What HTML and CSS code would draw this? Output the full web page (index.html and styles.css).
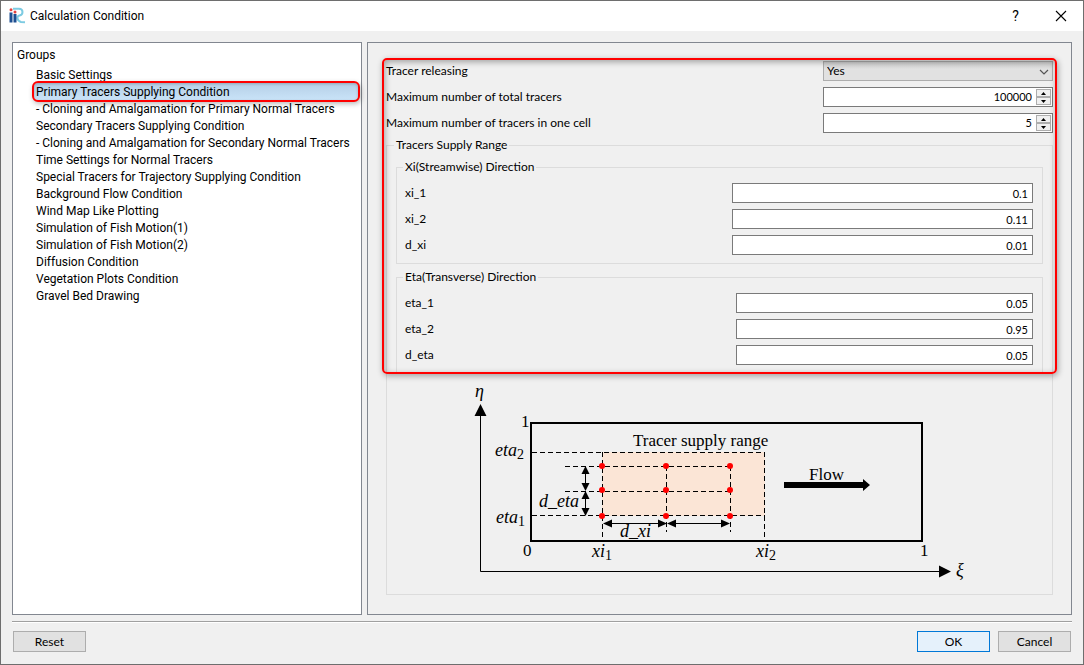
FILE: index.html
```html
<!DOCTYPE html>
<html lang="en">
<head>
<meta charset="utf-8">
<title>Calculation Condition</title>
<link rel="stylesheet" href="styles.css">
</head>
<body>
<div class="window">
  <header class="titlebar">
    <svg class="logo" width="18" height="18" viewBox="0 0 18 18" aria-hidden="true">
      <path d="M5 1.800H11Q14.500 2 14.500 5T11.500 8.500Q9 9 9.500 11.500T13 15L17 15.200" fill="none" stroke="#7dcbe2" stroke-width="2"/>
      <path d="M1.500 5.500H4.500V15.500H1.500ZM5.500 7H8.500V15.500H5.500Z" fill="#1d4f91"/>
      <circle cx="3" cy="2.800" r="1.500" fill="#e5423f"/>
      <circle cx="7" cy="5" r="1.500" fill="#e5423f"/>
    </svg>
    <h1 class="title">Calculation Condition</h1>
    <button class="title-button" type="button" aria-label="Help">?</button>
    <button class="title-button" type="button" aria-label="Close">
      <svg width="12" height="12" viewBox="0 0 12 12"><path d="M1 1L11 11M11 1L1 11" stroke="#000" stroke-width="1.100"/></svg>
    </button>
  </header>

  <main class="content">
    <nav class="groups" aria-label="Groups">
      <h2 class="groups-title">Groups</h2>
      <ul class="group-list">
        <li><button type="button" class="group">Basic Settings</button></li>
        <li><button type="button" class="group selected" aria-current="true">Primary Tracers Supplying Condition</button></li>
        <li><button type="button" class="group">- Cloning and Amalgamation for Primary Normal Tracers</button></li>
        <li><button type="button" class="group">Secondary Tracers Supplying Condition</button></li>
        <li><button type="button" class="group">- Cloning and Amalgamation for Secondary Normal Tracers</button></li>
        <li><button type="button" class="group">Time Settings for Normal Tracers</button></li>
        <li><button type="button" class="group">Special Tracers for Trajectory Supplying Condition</button></li>
        <li><button type="button" class="group">Background Flow Condition</button></li>
        <li><button type="button" class="group">Wind Map Like Plotting</button></li>
        <li><button type="button" class="group">Simulation of Fish Motion(1)</button></li>
        <li><button type="button" class="group">Simulation of Fish Motion(2)</button></li>
        <li><button type="button" class="group">Diffusion Condition</button></li>
        <li><button type="button" class="group">Vegetation Plots Condition</button></li>
        <li><button type="button" class="group">Gravel Bed Drawing</button></li>
      </ul>
    </nav>

    <section class="panel">
      <form class="form" id="conditions">
        <div class="fields fields-main">
          <label for="releasing">Tracer releasing</label>
          <span class="select-box">
            <select id="releasing" class="select"><option>Yes</option><option>No</option></select>
            <svg class="chevron" width="10" height="6" viewBox="0 0 10 6"><path d="M1 1L5 5L9 1" fill="none" stroke="#555" stroke-width="1.200"/></svg>
          </span>
          <label for="total">Maximum number of total tracers</label>
          <span class="spin">
            <input id="total" class="spin-input" type="text" inputmode="numeric" value="100000">
            <span class="spin-buttons">
              <button type="button" class="step" aria-label="Increase total"><svg width="5" height="3" viewBox="0 0 5 3"><path d="M0 3L2.500 0L5 3Z"/></svg></button>
              <button type="button" class="step" aria-label="Decrease total"><svg width="5" height="3" viewBox="0 0 5 3"><path d="M0 0L2.500 3L5 0Z"/></svg></button>
            </span>
          </span>
          <label for="cell">Maximum number of tracers in one cell</label>
          <span class="spin">
            <input id="cell" class="spin-input" type="text" inputmode="numeric" value="5">
            <span class="spin-buttons">
              <button type="button" class="step" aria-label="Increase per cell"><svg width="5" height="3" viewBox="0 0 5 3"><path d="M0 3L2.500 0L5 3Z"/></svg></button>
              <button type="button" class="step" aria-label="Decrease per cell"><svg width="5" height="3" viewBox="0 0 5 3"><path d="M0 0L2.500 3L5 0Z"/></svg></button>
            </span>
          </span>
        </div>

        <fieldset class="box range">
          <legend>Tracers Supply Range</legend>
          <fieldset class="box axis">
            <legend>Xi(Streamwise) Direction</legend>
            <div class="fields fields-xi">
              <label for="xi1">xi_1</label><input id="xi1" class="number" type="text" value="0.1">
              <label for="xi2">xi_2</label><input id="xi2" class="number" type="text" value="0.11">
              <label for="dxi">d_xi</label><input id="dxi" class="number" type="text" value="0.01">
            </div>
          </fieldset>
          <fieldset class="box axis">
            <legend>Eta(Transverse) Direction</legend>
            <div class="fields fields-eta">
              <label for="eta1">eta_1</label><input id="eta1" class="number" type="text" value="0.05">
              <label for="eta2">eta_2</label><input id="eta2" class="number" type="text" value="0.95">
              <label for="deta">d_eta</label><input id="deta" class="number" type="text" value="0.05">
            </div>
          </fieldset>
          <svg class="diagram" width="500" height="207" viewBox="470 378 500 207" role="img" aria-label="Tracer supply range diagram">
            <rect x="602" y="452" width="163" height="64" fill="#fbe5d6"/>
            <rect x="531" y="423" width="391" height="118" fill="none" stroke="#000" stroke-width="2"/>
            <path d="M480.500 414V571.500H940" fill="none" stroke="#000"/>
            <path d="M480.500 404L486.500 416H474.500ZM951 571.500L939 577.500V565.500Z"/>
            <g fill="none" stroke="#000" stroke-dasharray="5 3">
              <path d="M532 452.500H765M532 515.500H765M565 466.500H730M565 491.500H730"/>
              <path d="M602.500 452V540M764.500 452V540M666.500 466V532M730.500 466V532"/>
            </g>
            <path d="M585.500 470V488M585.500 495V512M608 523.500H662M672 523.500H726" stroke="#000" fill="none"/>
            <path d="M585.500 466L589.500 474H581.500ZM585.500 491L589.500 483H581.500ZM585.500 491L589.500 499H581.500ZM585.500 516L589.500 508H581.500Z"/>
            <path d="M603 523.500L612 519.500V527.500ZM667 523.500L658 519.500V527.500ZM667 523.500L676 519.500V527.500ZM730 523.500L721 519.500V527.500Z"/>
            <g fill="#f00">
              <circle cx="602" cy="466" r="3"/><circle cx="666" cy="466" r="3"/><circle cx="730" cy="466" r="3"/>
              <circle cx="602" cy="490" r="3"/><circle cx="666" cy="490" r="3"/><circle cx="730" cy="490" r="3"/>
              <circle cx="602" cy="516" r="3"/><circle cx="666" cy="516" r="3"/><circle cx="730" cy="516" r="3"/>
            </g>
            <path d="M784 482H863V479L870 485L863 491V488H784Z"/>
            <g class="plain">
              <text x="633" y="446">Tracer supply range</text>
              <text x="809" y="480">Flow</text>
              <text x="521" y="427">1</text>
              <text x="523" y="556">0</text>
              <text x="920" y="556">1</text>
            </g>
            <g class="math">
              <text x="475" y="397">η</text>
              <text x="956" y="576">ξ</text>
              <text x="495" y="456">eta<tspan class="sub" dy="3">2</tspan></text>
              <text x="496" y="523">eta<tspan class="sub" dy="3">1</tspan></text>
              <text x="539" y="507">d_eta</text>
              <text x="620" y="537">d_xi</text>
              <text x="592" y="557">xi<tspan class="sub" dy="3">1</tspan></text>
              <text x="756" y="557">xi<tspan class="sub" dy="3">2</tspan></text>
            </g>
          </svg>
        </fieldset>
        <div class="highlight"></div>
      </form>
    </section>
  </main>

  <footer class="footer">
    <button type="reset" form="conditions" class="button">Reset</button>
    <span class="spacer"></span>
    <button type="submit" form="conditions" class="button primary">OK</button>
    <button type="button" class="button">Cancel</button>
  </footer>
</div>
</body>
</html>
```

FILE: styles.css
```css
* { box-sizing: border-box; }
body {
  margin: 0;
  background: #f0f0f0;
  color: #000;
  font: 12px/16px Lato, "Liberation Sans", sans-serif;
}
button, input, select { font: inherit; color: inherit; margin: 0; }
.window {
  display: flex;
  flex-direction: column;
  min-height: 100vh;
  border: 1px solid #6e6e6e;
}
.titlebar {
  display: flex;
  align-items: center;
  height: 30px;
  padding-left: 7px;
  background: #fff;
  font-family: Roboto, "Noto Sans", sans-serif;
}
.title { flex: 1; margin: 0 0 0 4px; font-size: 12px; font-weight: 400; }
.title-button {
  display: flex;
  align-items: center;
  justify-content: center;
  width: 45px;
  height: 30px;
  padding: 0;
  border: 0;
  background: none;
  font-size: 14px;
}
.content { display: flex; flex: 1; gap: 5px; padding: 11px 11px 6px; }
.groups {
  flex: 0 0 350px;
  min-width: 0;
  padding: 4px 3px 4px 4px;
  border: 1px solid #828790;
  background: #fff;
  font-family: Roboto, "Noto Sans", sans-serif;
}
.groups-title { margin: 0; font-size: 12px; font-weight: 400; }
.group-list { margin: 3px 0 0 17px; padding: 0; list-style: none; }
.group {
  display: block;
  width: 100%;
  height: 17px;
  padding: 2px 2px 0;
  border: 0;
  background: none;
  line-height: 15px;
  text-align: left;
  white-space: nowrap;
}
.selected {
  position: relative;
  border-radius: 4px;
  background: linear-gradient(#b5cfe6, #c9e3f8);
  outline: 2px solid #f00;
  box-shadow: 1px 2px 5px 2px #0004, inset 0 1px 3px #0003;
}
.panel { flex: 1; min-width: 0; padding: 18px; border: 1px solid #828790; }
.form { position: relative; }
.fields { display: grid; grid-auto-rows: 20px; row-gap: 6px; align-items: center; }
.fields-main { grid-template-columns: 437fr 230fr; }
.fields-xi { grid-template-columns: 327fr 301fr; }
.fields-eta { grid-template-columns: 331fr 297fr; }
.select-box { position: relative; display: block; height: 20px; }
.select {
  appearance: none;
  width: 100%;
  height: 20px;
  padding: 0 3px;
  border: 1px solid #adadad;
  border-radius: 0;
  background: linear-gradient(#cfcfcf, #e1e1e1 7px);
  line-height: 18px;
}
.chevron { position: absolute; right: 4px; top: 8px; pointer-events: none; }
.number, .spin {
  width: 100%;
  height: 20px;
  border: 1px solid #7a7a7a;
  border-radius: 0;
  background: #fff;
}
.number { padding: 0 4px; text-align: right; font-size: 11px; }
.spin { display: flex; padding: 1px; }
.spin-input {
  flex: 1;
  min-width: 0;
  padding: 0 4px;
  border: 0;
  background: none;
  text-align: right;
  font-size: 11px;
}
.spin-buttons { display: flex; flex-direction: column; width: 15px; background: #f0f0f0; }
.step {
  display: flex;
  flex: 1;
  align-items: center;
  justify-content: center;
  padding: 0;
  border: 1px solid #adadad;
  background: #f0f0f0;
}
.box { min-width: 0; margin: 0; border: 1px solid #dcdcdc; }
.box legend { margin-left: -2px; padding: 0 2px; }
.range { margin-top: 4px; padding: 6px 9px 9px; }
.axis { padding: 8px 9px 8px 8px; }
.axis + .axis { margin-top: 5px; }
.diagram { display: block; max-width: 100%; margin: 4px auto 0; }
.plain, .math { font-family: "Liberation Serif", serif; font-size: 17px; }
.math { font-size: 18px; font-style: italic; }
.sub { font-size: 14px; font-style: normal; }
.highlight {
  position: absolute;
  top: -3px;
  left: -4px;
  right: -4px;
  height: 316px;
  border: 2px solid #f00;
  border-radius: 5px;
  box-shadow: 1px 2px 6px #0005, inset 1px 2px 6px #0005;
  pointer-events: none;
}
.footer {
  display: flex;
  gap: 8px;
  margin: 0 11px;
  padding: 9px 1px 12px;
  border-top: 1px solid #a0a0a0;
  box-shadow: inset 0 1px #fff;
}
.spacer { flex: 1; }
.button {
  width: 73px;
  height: 21px;
  padding: 0;
  border: 1px solid #adadad;
  background: #e1e1e1;
  line-height: 19px;
}
.primary { border-color: #0078d7; background: #e5f1fb; }
```
